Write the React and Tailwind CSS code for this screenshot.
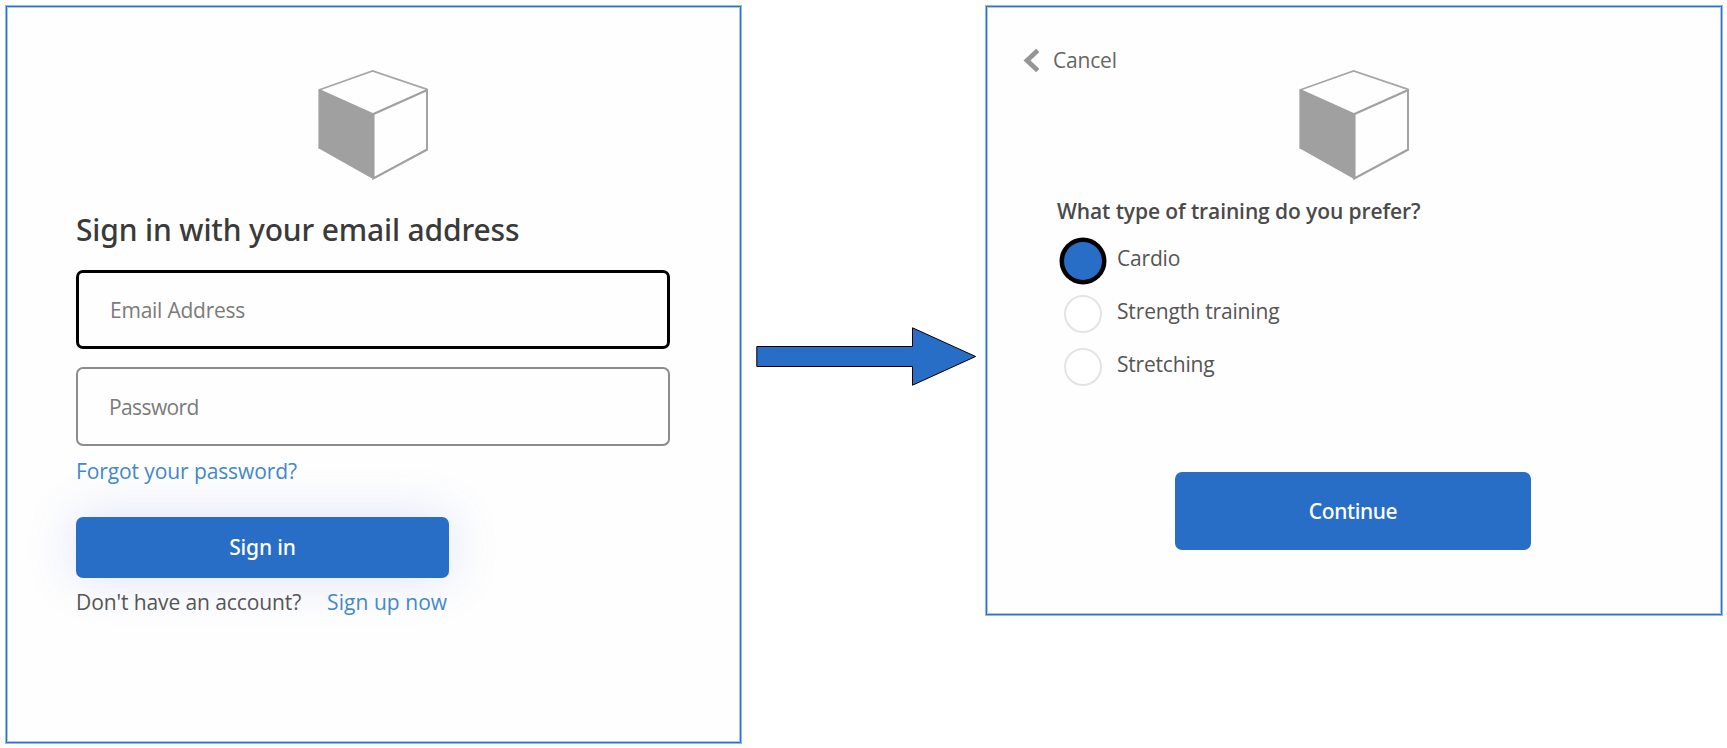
import React from "react";

const panel =
  "box-border shrink-0 border border-[#2a72d0] bg-[#fefefe] shadow-[0_0_0_1px_#93b8ea,inset_0_0_0_1px_#b4c6df]";

function CubeLogo({ className }) {
  return (
    <svg viewBox="0 0 110 112" className={`block h-[112px] w-[110px] ${className}`} fill="none">
      <path d="M0.9 20 L55 44.2 V109 L0.9 78.6 Z" fill="#a0a0a0" />
      <path d="M0.9 20 L54.6 1 L109.3 19.4" stroke="#a6a6a6" strokeWidth="1.8" />
      <path d="M0.9 19.5 V78.9" stroke="#a6a6a6" strokeWidth="1" />
      <path d="M0.9 20 L54.9 44.3 L109.2 20" stroke="#a0a0a0" strokeWidth="2.1" />
      <path d="M55.4 44.3 V108.4 L109.2 79.6" stroke="#a0a0a0" strokeWidth="2.3" />
      <path d="M109 19 V80.4" stroke="#a3a3a3" strokeWidth="2" />
    </svg>
  );
}

function SignInPanel() {
  return (
    <section className={`${panel} flex h-[737px] w-[735px] flex-col items-start pt-[63px] pl-[69px]`}>
      <CubeLogo className="ml-[242px]" />
      <h1 className="mt-[28px] font-['Noto_Sans',sans-serif] text-[30px] leading-10 font-medium tracking-[-0.15px] whitespace-nowrap text-[#3a3a3a]">
        Sign in with your email address
      </h1>
      <input
        type="email"
        placeholder="Email Address"
        className="mt-[20px] h-[79px] w-[594px] rounded-[7px] border-[3px] border-black bg-transparent pl-[31px] tracking-[-0.24px] outline-none placeholder:text-[#7b7b7b]"
      />
      <input
        type="password"
        placeholder="Password"
        className="mt-[18px] h-[79px] w-[594px] rounded-[7px] border-2 border-[#8c8c8c] bg-transparent pl-[31px] tracking-[-0.6px] outline-none placeholder:text-[#7b7b7b]"
      />
      <a className="mt-[11px] tracking-[-0.1px] text-[#4489c7]">Forgot your password?</a>
      <button className="mt-[32px] h-[61px] w-[373px] rounded-[7px] bg-[#286ec7] pb-px font-['Noto_Sans',sans-serif] font-medium tracking-[-0.15px] text-white shadow-[0_0_50px_rgba(80,105,225,0.19)]">
        Sign in
      </button>
      <div className="mt-[10px] flex gap-[26px]">
        <span className="tracking-[-0.1px] text-[#555]">Don&#39;t have an account?</span>
        <a className="tracking-[0.05px] text-[#4489c7]">Sign up now</a>
      </div>
    </section>
  );
}

function FlowArrow() {
  return (
    <svg viewBox="0 0 222 60" className="mt-[321px] ml-[15px] block h-[60px] w-[222px] shrink-0">
      <path
        d="M0.8 19.5 H156.5 V0.8 L219.6 29.5 L156.5 58.2 V39.5 H0.8 Z"
        fill="#286ec7"
        stroke="#000"
        strokeWidth="1"
      />
    </svg>
  );
}

function Choice({ label, selected, spacing }) {
  return (
    <label className="flex h-[53px] items-center gap-[15px] text-[#555]">
      <span
        className={
          selected
            ? "size-[38px] rounded-full bg-[#286ec7] shadow-[0_0_0_4.5px_#000]"
            : "size-[38px] rounded-full border-2 border-[#e4e4e4] bg-white"
        }
      />
      <span className={`pb-[5px] ${spacing}`}>{label}</span>
    </label>
  );
}

function TrainingPanel() {
  return (
    <section className={`${panel} flex h-[609px] w-[736px] flex-col items-start`}>
      <div className="flex h-[63px] items-start gap-[14px] pt-[40px] pl-[36px]">
        <svg viewBox="0 0 16 24" className="mt-[2px] block h-6 w-4" fill="none">
          <path d="M14.8 1.4 L4 11.5 L14.8 21.6" stroke="#959595" strokeWidth="4.8" />
        </svg>
        <span className="pt-px leading-6 tracking-[-0.2px] text-[#666]">Cancel</span>
      </div>
      <CubeLogo className="ml-[312px]" />
      <h2 className="mt-[15px] ml-[70px] font-semibold tracking-[-0.1px] whitespace-nowrap text-[#4a4a4a]">
        What type of training do you prefer?
      </h2>
      <div className="mt-[9px] ml-[77px] flex flex-col">
        <Choice label="Cardio" selected spacing="tracking-[-0.2px]" />
        <Choice label="Strength training" spacing="tracking-[-0.15px]" />
        <Choice label="Stretching" spacing="tracking-[-0.2px]" />
      </div>
      <button className="mt-[79px] ml-[188px] h-[78px] w-[356px] rounded-[7px] bg-[#286ec7] font-['Noto_Sans',sans-serif] font-medium tracking-[-0.35px] text-white">
        Continue
      </button>
    </section>
  );
}

export default function App() {
  return (
    <main className="flex h-[748px] w-[1727px] items-start overflow-hidden bg-white pt-[6px] pl-[6px] font-['Open_Sans',sans-serif] text-[21px] leading-7">
      <SignInPanel />
      <FlowArrow />
      <div className="ml-[8px] shrink-0">
        <TrainingPanel />
      </div>
    </main>
  );
}
